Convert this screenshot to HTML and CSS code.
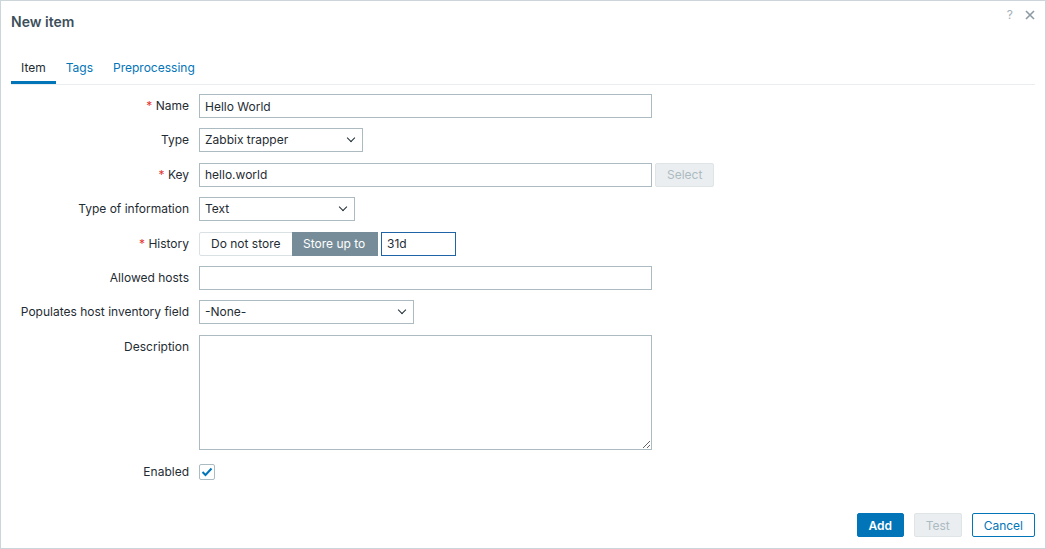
FILE: index.html
```html
<!DOCTYPE html>
<html lang="en">
<head>
    <meta charset="UTF-8">
    <title>New item</title>
    <link rel="stylesheet" href="styles.css">
</head>
<body>
    <div class="dialog">
        <div class="dialog-head">
            <h4 class="dialog-title">New item</h4>
            <div class="dialog-actions">
                <span class="help">?</span>
                <svg class="close" width="10" height="10" viewBox="0 0 10 10">
                    <path d="M1 1 L9 9 M9 1 L1 9" stroke="#8c9aa3" stroke-width="1.6" fill="none"/>
                </svg>
            </div>
        </div>

        <ul class="tabs">
            <li class="tab active">Item</li>
            <li class="tab">Tags</li>
            <li class="tab">Preprocessing</li>
        </ul>

        <div class="form">
            <label class="label"><span class="req">*</span> Name</label>
            <div class="field"><input class="input wide" type="text" value="Hello World"></div>

            <label class="label">Type</label>
            <div class="field">
                <div class="select w-type">Zabbix trapper <span class="caret"></span></div>
            </div>

            <label class="label"><span class="req">*</span> Key</label>
            <div class="field">
                <input class="input wide" type="text" value="hello.world">
                <button class="btn-grey" disabled>Select</button>
            </div>

            <label class="label">Type of information</label>
            <div class="field">
                <div class="select w-info">Text <span class="caret"></span></div>
            </div>

            <label class="label"><span class="req">*</span> History</label>
            <div class="field">
                <div class="segmented">
                    <span class="seg">Do not store</span>
                    <span class="seg on">Store up to</span>
                </div>
                <input class="input focus w-history" type="text" value="31d">
            </div>

            <label class="label">Allowed hosts</label>
            <div class="field"><input class="input wide" type="text"></div>

            <label class="label">Populates host inventory field</label>
            <div class="field">
                <div class="select w-inv">-None- <span class="caret"></span></div>
            </div>

            <label class="label">Description</label>
            <div class="field"><textarea class="textarea"></textarea></div>

            <label class="label">Enabled</label>
            <div class="field">
                <span class="checkbox">
                    <svg width="12" height="10" viewBox="0 0 12 10">
                        <path d="M1.5 5 L4.5 8 L10.5 1.5" stroke="#0275b8" stroke-width="2" fill="none"/>
                    </svg>
                </span>
            </div>
        </div>

        <div class="footer">
            <button class="btn-main">Add</button>
            <button class="btn-grey btn-test" disabled>Test</button>
            <button class="btn-alt">Cancel</button>
        </div>
    </div>
</body>
</html>
```

FILE: styles.css
```css
body {
    margin: 0;
    font-family: Inter, "Noto Sans", sans-serif;
    font-size: 12px;
    color: #1f2c33;
    background-color: #fff;
}
.dialog {
    width: 1044px;
    height: 547px;
    border: 1px solid #ccd5d9;
    display: flex;
    flex-direction: column;
}
.dialog-head {
    display: flex;
    justify-content: space-between;
    padding: 0 10px;
    height: 44px;
}
.dialog-title {
    margin: 0;
    padding-top: 12px;
    font-size: 14px;
    font-weight: 600;
    color: #3d4f5a;
}
.dialog-actions {
    display: flex;
    gap: 12px;
    padding-top: 7px;
    align-items: flex-start;
}
.help {
    color: #a4b1b8;
    font-size: 12px;
    line-height: 14px;
}
.close {
    margin-top: 2px;
}
.tabs {
    list-style: none;
    margin: 0 10px;
    padding: 0;
    display: flex;
    border-bottom: 1px solid #ebeef0;
    height: 39px;
}
.tab {
    padding: 15px 10px 0;
    height: 24px;
    color: #0275b8;
    font-size: 12px;
}
.tab.active {
    color: #1f2c33;
    border-bottom: 3px solid #0275b8;
    height: 21px;
    margin-bottom: -1px;
}
.form {
    display: grid;
    grid-template-columns: 178px 1fr;
    column-gap: 10px;
    row-gap: 10.4px;
    padding: 9px 0 0 10px;
}
.label {
    text-align: right;
    line-height: 24px;
    white-space: nowrap;
}
.req {
    color: #e33734;
}
.field {
    display: flex;
    align-items: flex-start;
    gap: 3px;
}
.input {
    box-sizing: border-box;
    height: 24px;
    border: 1px solid #acbbc2;
    padding: 0 5px;
    font-family: inherit;
    font-size: 12px;
    color: #1f2c33;
    margin: 0;
    outline: none;
}
.input.wide {
    width: 453px;
}
.input.focus {
    border-color: #1f65a6;
}
.w-history {
    width: 75px;
}
.select {
    box-sizing: border-box;
    height: 24px;
    border: 1px solid #acbbc2;
    padding: 0 5px;
    line-height: 22px;
    display: flex;
    justify-content: space-between;
    align-items: center;
}
.caret {
    width: 5px;
    height: 5px;
    border-right: 1.6px solid #1f2c33;
    border-bottom: 1.6px solid #1f2c33;
    transform: rotate(45deg);
    margin: -4px 3px 0 0;
}
.w-type {
    width: 164px;
}
.w-info {
    width: 156px;
}
.w-inv {
    width: 215px;
}
.segmented {
    display: flex;
    box-sizing: border-box;
    height: 24px;
    border: 1px solid #d9e1e4;
    border-radius: 2px;
}
.seg {
    padding: 0 11px;
    line-height: 22px;
    color: #1f2c33;
}
.seg:first-child {
    width: 70px;
}
.seg.on {
    background-color: #768d99;
    color: #fff;
    margin: -1px -1px -1px 0;
    line-height: 24px;
    width: 64px;
}
.textarea {
    box-sizing: border-box;
    width: 453px;
    height: 115px;
    border: 1px solid #acbbc2;
    margin: 0;
    resize: both;
    font-family: inherit;
}
.checkbox {
    box-sizing: border-box;
    width: 16px;
    height: 16px;
    border: 1px solid #acbbc2;
    border-radius: 2px;
    display: flex;
    align-items: center;
    justify-content: center;
    margin-top: 4px;
}
.btn-grey {
    box-sizing: border-box;
    height: 24px;
    padding: 0 11px;
    border: 1px solid #dfe4e7;
    background-color: #ebeef0;
    color: #acbbc2;
    font-family: inherit;
    font-size: 12px;
    border-radius: 2px;
}
.footer {
    margin-top: auto;
    display: flex;
    justify-content: flex-end;
    gap: 10px;
    padding: 0 10px 11px 0;
}
.btn-main {
    box-sizing: border-box;
    height: 24px;
    width: 47px;
    padding: 0;
    border: 1px solid #0275b8;
    background-color: #0275b8;
    color: #fff;
    font-family: inherit;
    font-size: 12px;
    font-weight: 600;
    border-radius: 2px;
}
.btn-test {
    width: 48px;
}
.btn-alt {
    box-sizing: border-box;
    height: 24px;
    padding: 0 11px;
    border: 1px solid #0275b8;
    background-color: #fff;
    color: #0275b8;
    font-family: inherit;
    font-size: 12px;
    border-radius: 2px;
}
```
